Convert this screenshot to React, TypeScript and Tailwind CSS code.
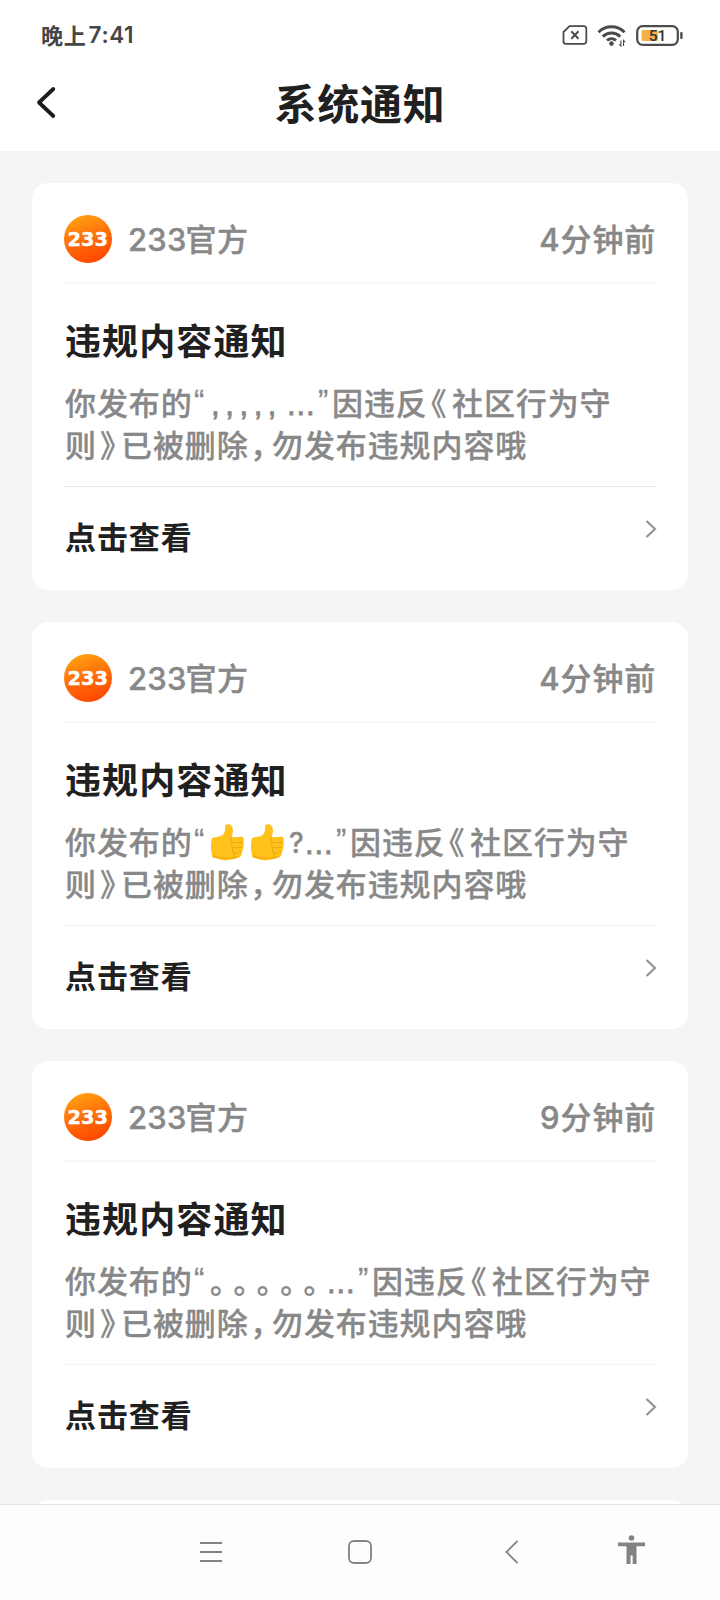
import React from 'react';

type Run = { text: string; className: string };

type Notice = {
  id: number;
  time: [string, string];
  dividerClass: string;
  quoted: React.ReactNode;
};

const Piece: React.FC<Run> = ({ text, className }) => (
  <span className={`inline-block whitespace-pre ${className}`}>{text}</span>
);

const Dots = () => (
  <Piece text="..." className="w-[31px] pt-[5px] font-['Liberation_Sans'] [-webkit-text-stroke:0.8px_#888]" />
);

const ThumbsUp = () => (
  <svg className="mr-[6px] mt-[3px] inline-block h-[37px] w-[34px]" viewBox="0 0 33 36">
    <path
      d="M2 13.5c3-.8 6.500-1.200 9.500-2.400 2.600-1.200 3.400-4 3.100-8.600C14.500.8 16 .2 17.600.2c2.800 0 4.500 2.500 4.700 5.500.1 2.500-.8 5-1.100 7.200l9.300-.5c2.200 0 2.800 2.800 1.700 4.600 1.200 1.700 1 4-.4 5.200.8 1.900.3 4-1.200 5.100.6 2.300-.4 4.300-2.300 4.900C24.500 34.500 18 35.600 12.500 35c-4-.4-7-1.800-10-2.300C1 28 .2 19 2 13.500z"
      fill="#ffc21a"
    />
    <path
      d="M32 17.200c-2.500 1-6 .8-9.500.9M31.700 22.300c-3 1-6 .8-8.900.9M30.400 27.600c-2.500.8-5 .7-7.300.8M21 13c-1.500 1.500-1.500 4 .8 5-1.500 1.800-1.200 3.800.7 5-1 1.800-.8 4 .9 5.200-1 2-.7 3.700.8 4.900"
      fill="none"
      stroke="#f0a616"
      strokeWidth="1"
      strokeLinecap="round"
    />
    <path d="M3 31.500c4 .6 7.500 2 12 2 5 0 10-.6 13.500-2" fill="none" stroke="#f5ac14" strokeWidth="1.500" />
  </svg>
);

const notices: Notice[] = [
  {
    id: 1,
    time: ['4', '分钟前'],
    dividerClass: 'border-[#e9e9e9]',
    quoted: (
      <>
        <Piece
          text=",,,,,"
          className="w-[77px] pl-[1px] pt-[5px] font-['Liberation_Sans'] tracking-[5.600px] [-webkit-text-stroke:0.9px_#888]"
        />
        <Dots />
      </>
    ),
  },
  {
    id: 2,
    time: ['4', '分钟前'],
    dividerClass: 'border-[#f0f0f0]',
    quoted: (
      <>
        <ThumbsUp />
        <ThumbsUp />
        <Piece text="?" className="-ml-[1px] w-[16px] pt-[3px] font-['Inter'] text-[28px] tracking-normal" />
        <Dots />
      </>
    ),
  },
  {
    id: 3,
    time: ['9', '分钟前'],
    dividerClass: 'border-[#f6f5f6]',
    quoted: (
      <>
        <Piece text="。。。。。" className="w-[117px] text-[30px] tracking-[8.400px]" />
        <Dots />
      </>
    ),
  },
];

const StatusBar = () => (
  <div className="flex h-[70px] items-center justify-between pl-[41px] pr-[36px]">
    <div className="flex items-center font-bold leading-none text-[#464646]">
      <span className="-mt-[3px] text-[22px] tracking-[0.800px]">晚上</span>
      <span className="pl-[2px] font-['Inter'] text-[22.500px] font-semibold tracking-[0.600px]">7:41</span>
    </div>
    <div className="flex items-center text-[#4b4b4b]">
      <svg className="h-[20px] w-[26px]" viewBox="0 0 26 20" fill="none" stroke="currentColor" strokeWidth="1.800">
        <path d="M7.500 1.200H22a2.300 2.300 0 0 1 2.300 2.300v13a2.300 2.300 0 0 1-2.300 2.300H3.800a2.300 2.300 0 0 1-2.300-2.300V7z" strokeLinejoin="round" />
        <path d="M9.300 6.300l7.200 7.400M16.500 6.300l-7.200 7.400" strokeWidth="2" />
      </svg>
      <svg className="ml-[9px] h-[23px] w-[30px]" viewBox="0 0 30 23" fill="none" stroke="currentColor" strokeWidth="3">
        <path d="M1.500 8.200a18.500 18.500 0 0 1 26 0" />
        <path d="M5.800 12.600a12.500 12.500 0 0 1 17.400 0" />
        <path d="M10 16.500a6.700 6.700 0 0 1 9 0" />
        <circle cx="14.500" cy="19.600" r="2.300" fill="currentColor" stroke="none" />
        <path d="M23.900 16.500v5.500l-1.600-1.700M26.500 22v-5.500l1.600 1.700" strokeWidth="1.100" />
      </svg>
      <svg className="ml-[9px] h-[21px] w-[48px]" viewBox="0 0 48 21">
        <rect x="1.200" y="1.200" width="40.600" height="18.600" rx="5.500" fill="#fff" stroke="currentColor" strokeWidth="2.200" />
        <rect x="5.500" y="5" width="16.500" height="11" rx="1.500" fill="#f8b044" />
        <rect x="44.200" y="7" width="2.400" height="7" rx="1" fill="currentColor" />
        <text x="21.500" y="16" textAnchor="middle" fontFamily="Roboto, sans-serif" fontSize="15.500" fontWeight="500" fill="#333">
          51
        </text>
      </svg>
    </div>
  </div>
);

const TitleBar = () => (
  <div className="grid h-[81px] grid-cols-[1fr_auto_1fr] items-start pt-[9px]">
    <svg className="ml-[36px] mt-[7px] h-[34px] w-[22px]" viewBox="0 0 22 34">
      <path d="M17.300 3L3 16.500l14.300 13.500" fill="none" stroke="#1d1d1d" strokeWidth="3.800" strokeLinecap="round" strokeLinejoin="round" />
    </svg>
    <h1 className="text-[42px] font-bold leading-[46px] tracking-[0.700px] text-[#202020]">系统通知</h1>
    <div />
  </div>
);

const Logo = () => (
  <svg className="mt-[2px] h-[48px] w-[48px]" viewBox="0 0 48 48">
    <defs>
      <linearGradient id="logo-fill" x1="0.250" y1="0" x2="0.600" y2="1">
        <stop offset="0" stopColor="#ffa30f" />
        <stop offset="0.550" stopColor="#ff6a0a" />
        <stop offset="1" stopColor="#ff4800" />
      </linearGradient>
    </defs>
    <circle cx="24" cy="24" r="24" fill="url(#logo-fill)" />
    <text
      x="3.500"
      y="31"
      textLength="40.500"
      lengthAdjust="spacingAndGlyphs"
      fontFamily="'DejaVu Sans', sans-serif"
      fontWeight="700"
      fontSize="19.500"
      fill="#fff"
      stroke="#fff"
      strokeWidth="0.400"
    >
      233
    </text>
  </svg>
);

const NoticeCard: React.FC<{ notice: Notice }> = ({ notice }) => (
  <section className="h-[407px] shrink-0 rounded-[16px] bg-white px-8">
    <div className="flex h-[101px] items-center border-b-2 border-[#f7f7f7] pb-[1px] pt-[11px] text-[31px] font-medium text-[#888] [-webkit-text-stroke:0.4px_#888]">
      <Logo />
      <div className="flex items-center pl-[16px] leading-none">
        <span className="mt-[4px] font-['Inter'] text-[31px] tracking-[0.200px]">233</span>
        <span className="-ml-[1px] tracking-[0.500px]">官方</span>
      </div>
      <div className="ml-auto flex items-center leading-none">
        <span className="mt-[4px] font-['Inter'] text-[31px]">{notice.time[0]}</span>
        <span className="pl-[1px] tracking-[0.800px]">{notice.time[1]}</span>
      </div>
    </div>

    <div className={`h-[203px] border-b ${notice.dividerClass}`}>
      <h2 className="pl-[1px] pt-[34px] text-[36px] font-bold leading-[42px] tracking-[1.100px] text-[#202020]">违规内容通知</h2>
      <div className="mt-[21px] whitespace-nowrap text-[31px] font-medium leading-[42px] tracking-[0.900px] text-[#888] [-webkit-text-stroke:0.3px_#888]">
        <div className="flex h-[42px] items-center">
          <Piece text="你发布的" className="w-[129px] pl-[1px]" />
          <Piece text="“" className="w-[17px] pl-[1px] font-['Liberation_Sans']" />
          {notice.quoted}
          <Piece text="”" className="w-[14px] font-['Liberation_Sans']" />
          <Piece text="因违反" className="w-[96px]" />
          <Piece text="《" className="w-[24px] pl-[3px] [font-feature-settings:'halt']" />
          <Piece text="社区行为守" className="" />
        </div>
        <div className="flex h-[42px] items-center">
          <Piece text="则" className="w-[33px] pl-[1px]" />
          <Piece text="》" className="w-[24px] pl-[3px] [font-feature-settings:'halt']" />
          <Piece text="已被删除" className="w-[129px]" />
          <Piece text="，" className="w-[22px] [font-feature-settings:'halt']" />
          <Piece text="勿发布违规内容哦" className="" />
        </div>
      </div>
    </div>

    <div className="flex justify-between">
      <span className="pl-[1px] pt-[29px] text-[31px] font-bold leading-[40px] tracking-[0.900px] text-[#202020]">点击查看</span>
      <svg className="-mr-[1px] mt-[32px] h-[20px] w-[12px]" viewBox="0 0 12 20">
        <path d="M1.500 2l8.500 8-8.500 8" fill="none" stroke="#949494" strokeWidth="2.200" />
      </svg>
    </div>
  </section>
);

const NavBar = () => (
  <nav className="flex h-[96px] shrink-0 items-start border-t border-[#e2e2e2] bg-[#fefdfe] pt-[31px] text-[#848284]">
    <svg className="ml-[200px] mt-[4px] h-[24px] w-[22px]" viewBox="0 0 22 24" stroke="currentColor" strokeWidth="1.800">
      <path d="M0 3h22M0 12h22M0 21h22" />
    </svg>
    <svg className="ml-[126px] mt-[4px] h-[24px] w-[24px]" viewBox="0 0 24 24">
      <rect x="1" y="1" width="22" height="22" rx="5" fill="none" stroke="currentColor" strokeWidth="1.800" />
    </svg>
    <svg className="ml-[133px] mt-[4px] h-[24px] w-[14px]" viewBox="0 0 14 24">
      <path d="M12.500.8L1.500 12l11 11.200" fill="none" stroke="currentColor" strokeWidth="1.800" />
    </svg>
    <svg className="ml-[99px] -mt-[1px] h-[29px] w-[27px]" viewBox="0 0 27 29" fill="currentColor">
      <circle cx="13.500" cy="3" r="2.800" />
      <path d="M0 7.500h27v3.800h-8.500V29h-3.800v-8.500h-2.200V29H8.500V11.300H0z" />
    </svg>
  </nav>
);

export default function App() {
  return (
    <div className="flex h-[1600px] w-[720px] flex-col overflow-hidden bg-[#f5f5f5] font-['Noto_Sans_CJK_SC',sans-serif]">
      <header className="h-[151px] shrink-0 bg-white">
        <StatusBar />
        <TitleBar />
      </header>
      <main className="flex min-h-0 flex-1 flex-col gap-8 overflow-hidden px-8 pt-8">
        {notices.map(n => (
          <NoticeCard key={n.id} notice={n} />
        ))}
        <div className="h-[407px] shrink-0 rounded-[16px] bg-white" />
      </main>
      <NavBar />
    </div>
  );
}
